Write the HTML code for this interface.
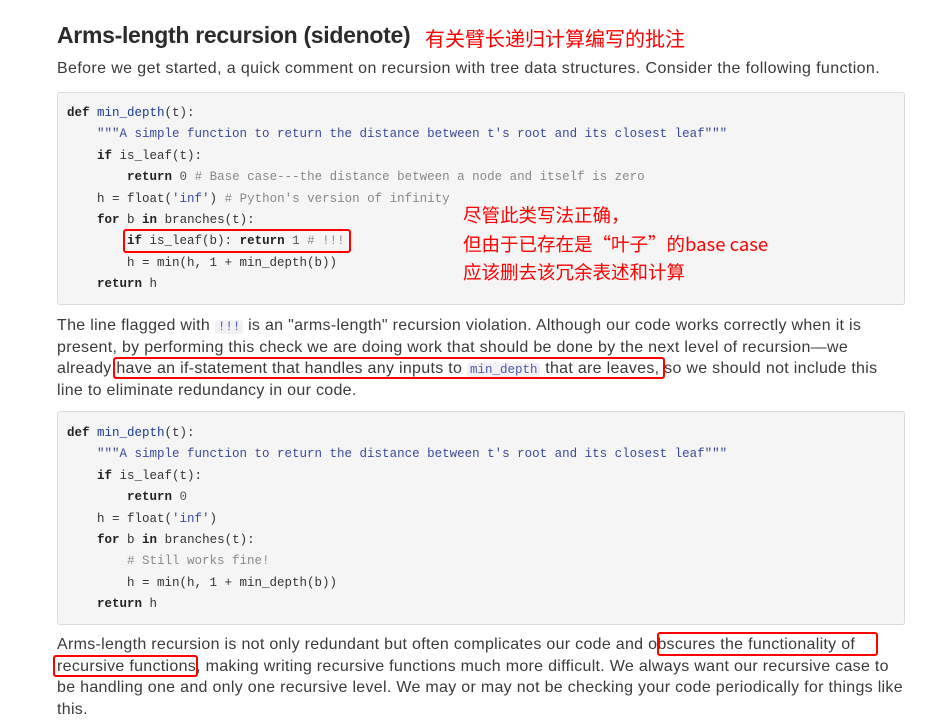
<!DOCTYPE html>
<html><head><meta charset="utf-8"><style>
body{margin:0;width:935px;height:722px;background:#fff;position:relative;overflow:hidden;font-family:"Liberation Sans","Noto Sans CJK SC",sans-serif;color:#3a3a3a}
.a{position:absolute;white-space:nowrap}
.t{font-size:16px;letter-spacing:0.3px}
.h{font-size:23px;font-weight:bold;color:#2b2b2b;letter-spacing:-0.3px}
.cn{color:#f00;font-family:"Noto Sans CJK SC","WenQuanYi Zen Hei",sans-serif;letter-spacing:0}
.code{position:absolute;left:57px;width:846px;background:#f5f5f5;border:1px solid #dcdcdc;border-radius:3px}
.c{position:absolute;font-family:"Liberation Mono",monospace;font-size:12.5px;color:#333;white-space:pre}
.k{font-weight:bold;color:#222}.f{color:#1c3a9a}.s{color:#3a4a9a}.m{color:#888}.n{color:#555}
.box{position:absolute;border:2.5px solid #f00;border-radius:3px}
.ic{font-family:"Liberation Mono",monospace;font-size:12.5px;letter-spacing:0;background:#f3f0f3;padding:0 3px;border-radius:3px;color:#4a5aaa;line-height:1}
</style></head><body>
<div class="a h" style="left:57px;top:22px">Arms-length recursion (sidenote)</div>
<div class="a cn" style="left:425px;top:23px;font-size:20px">有关臂长递归计算编写的批注</div>
<div class="a t" style="left:57px;top:60px;letter-spacing:0.38px">Before we get started, a quick comment on recursion with tree data structures. Consider the following function.</div>

<div class="code" style="top:92px;height:211px"></div>
<div class="c" style="left:67px;top:103px;line-height:21.4px"><span class="k">def</span> <span class="f">min_depth</span>(t):
    <span class="s">"""A simple function to return the distance between t's root and its closest leaf"""</span>
    <span class="k">if</span> is_leaf(t):
        <span class="k">return</span> <span class="n">0</span> <span class="m"># Base case---the distance between a node and itself is zero</span>
    h = float(<span class="s">'inf'</span>) <span class="m"># Python's version of infinity</span>
    <span class="k">for</span> b <span class="k">in</span> branches(t):
        <span class="k">if</span> is_leaf(b): <span class="k">return</span> <span class="n">1</span> <span class="m"># !!!</span>
        h = min(h, 1 + min_depth(b))
    <span class="k">return</span> h</div>
<div class="box" style="left:123px;top:229px;width:224px;height:20px"></div>
<div class="a cn" style="left:463px;top:201px;font-size:18.5px;line-height:28.5px">尽管此类写法正确，<br>但由于已存在是“叶子”的base case<br>应该删去该冗余表述和计算</div>

<div class="a t" style="left:57px;top:315px;line-height:21.5px">The line flagged with <span class="ic">!!!</span> is an "arms-length" recursion violation. Although our code works correctly when it is<br>present, by performing this check we are doing work that should be done by the next level of recursion—we<br>already have an if-statement that handles any inputs to <span class="ic">min_depth</span> that are leaves, so we should not include this<br>line to eliminate redundancy in our code.</div>
<div class="box" style="left:113px;top:357px;width:548px;height:18px"></div>

<div class="code" style="top:411px;height:212px"></div>
<div class="c" style="left:67px;top:423px;line-height:21.4px"><span class="k">def</span> <span class="f">min_depth</span>(t):
    <span class="s">"""A simple function to return the distance between t's root and its closest leaf"""</span>
    <span class="k">if</span> is_leaf(t):
        <span class="k">return</span> <span class="n">0</span>
    h = float(<span class="s">'inf'</span>)
    <span class="k">for</span> b <span class="k">in</span> branches(t):
        <span class="m"># Still works fine!</span>
        h = min(h, 1 + min_depth(b))
    <span class="k">return</span> h</div>

<div class="a t" style="left:57px;top:634px;line-height:21.5px">Arms-length recursion is not only redundant but often complicates our code and obscures the functionality of<br>recursive functions, making writing recursive functions much more difficult. We always want our recursive case to<br>be handling one and only one recursive level. We may or may not be checking your code periodically for things like<br>this.</div>
<div class="box" style="left:657px;top:632px;width:217px;height:20px"></div>
<div class="box" style="left:53px;top:655px;width:141px;height:18px"></div>
</body></html>
